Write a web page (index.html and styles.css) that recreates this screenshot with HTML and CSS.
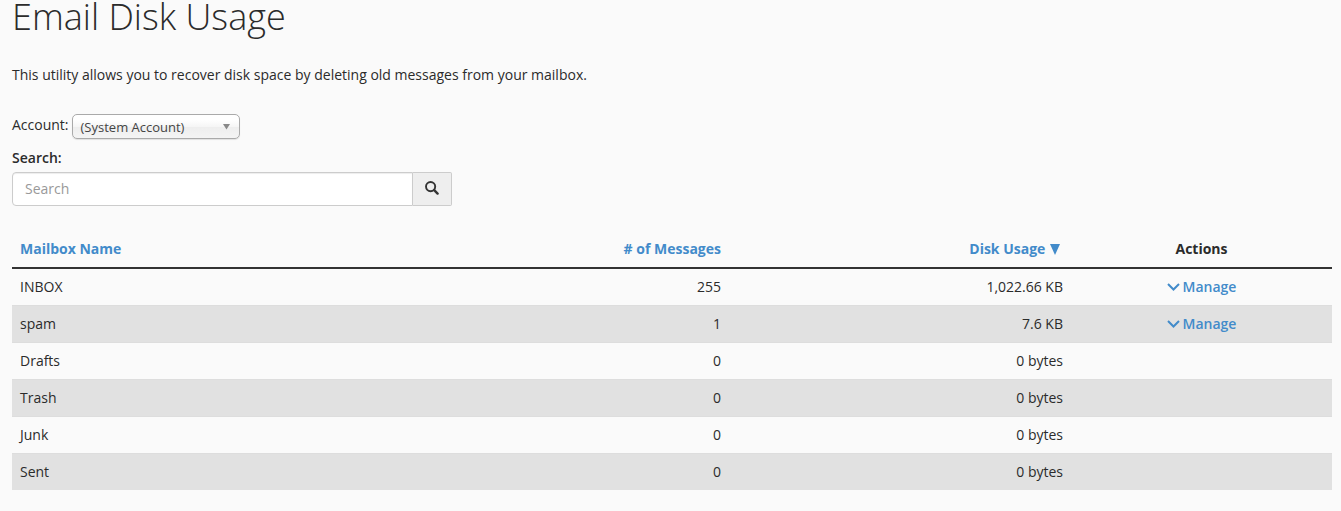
FILE: index.html
```html
<!DOCTYPE html>
<html lang="en">
<head>
<meta charset="utf-8">
<title>Email Disk Usage</title>
<link rel="stylesheet" href="styles.css">
</head>
<body>
<main class="page">
<h1 class="title">Email Disk Usage</h1>
<p class="intro">This utility allows you to recover disk space by deleting old messages from your mailbox.</p>
<div class="account"><span>Account:</span><button class="select" type="button"><span>(System Account)</span><svg width="7" height="6" viewBox="0 0 7 6"><path d="M0 0h7L3.500 5.500z" fill="#888"/></svg></button></div>
<label class="search-label" for="q">Search:</label>
<div class="search"><input id="q" class="search-input" type="text" placeholder="Search"><button class="search-button" type="button" aria-label="Search"><svg width="14" height="14" viewBox="0 0 14 14" fill="none" stroke="#333"><circle cx="5.6" cy="5.6" r="4.600" stroke-width="1.900"/><path d="M9.200 9.200l3.400 3.400" stroke-width="2.400" stroke-linecap="round"/></svg></button></div>
<table class="table">
<colgroup><col class="c-name"><col class="c-count"><col class="c-usage"><col class="c-actions"></colgroup>
<thead><tr><th class="link">Mailbox Name</th><th class="link num">#&nbsp;of Messages</th><th class="link num usage-head">Disk Usage <svg class="sort" width="10" height="11" viewBox="0 0 10 11"><path d="M0 0h10L5 11z" fill="currentColor"/></svg></th><th class="actions">Actions</th></tr></thead>
<tbody>
<tr><td>INBOX</td><td class="num">255</td><td class="num">1,022.66 KB</td><td class="actions"><a class="manage"><svg width="13" height="8" viewBox="0 0 13 8"><path d="M1 1l5.500 5.500L12 1" fill="none" stroke="currentColor" stroke-width="2"/></svg>Manage</a></td></tr>
<tr><td>spam</td><td class="num">1</td><td class="num">7.6 KB</td><td class="actions"><a class="manage"><svg width="13" height="8" viewBox="0 0 13 8"><path d="M1 1l5.500 5.500L12 1" fill="none" stroke="currentColor" stroke-width="2"/></svg>Manage</a></td></tr>
<tr><td>Drafts</td><td class="num">0</td><td class="num">0 bytes</td><td></td></tr>
<tr><td>Trash</td><td class="num">0</td><td class="num">0 bytes</td><td></td></tr>
<tr><td>Junk</td><td class="num">0</td><td class="num">0 bytes</td><td></td></tr>
<tr><td>Sent</td><td class="num">0</td><td class="num">0 bytes</td><td></td></tr>
</tbody>
</table>
</main>
</body>
</html>
```
FILE: styles.css
```css
* { box-sizing: border-box; }
body { margin: 0; background: #fafafa; color: #2b2b2b; font: 14px/20px "Open Sans", sans-serif; }
.page { padding: 0 9px 0 12px; }
.title { margin: 0; font-size: 36px; line-height: 34px; font-weight: 300; }
.intro { margin: 31px 0 28px; }
.account { display: flex; align-items: center; gap: 3px; height: 26px; line-height: 22px; }
.account > span { padding-bottom: 3px; }
.select { width: 168px; height: 25px; padding: 2px 9px 0 8px; display: flex; align-items: center; justify-content: space-between; border: 1px solid #aaa; border-radius: 5px; background: linear-gradient(#fff 20%, #f6f6f6 50%, #eee 52%, #f4f4f4); box-shadow: 0 1px 1px rgba(0, 0, 0, .1); color: #444; font: 13px "Open Sans", sans-serif; }
.select svg { margin-bottom: 1px; }
.search-label { display: block; margin: 9px 0 4px; font-weight: 600; }
.search { display: flex; width: 440px; height: 34px; }
.search-input { width: 401px; padding: 6px 12px; border: 1px solid #ccc; border-radius: 4px 0 0 4px; background: #fff; box-shadow: inset 0 1px 1px rgba(0, 0, 0, .075); font: 14px/20px "Open Sans", sans-serif; }
.search-input::placeholder { color: #999; opacity: 1; }
.search-button { width: 39px; padding: 0 0 2px; display: flex; align-items: center; justify-content: center; border: 1px solid #ccc; border-left: 0; border-radius: 0 2px 2px 0; background: #eee; }
.table { width: 1320px; margin-top: 24px; table-layout: fixed; border-collapse: separate; border-spacing: 0; }
.c-name { width: 376px; }
.c-count { width: 341px; }
.c-usage { width: 342px; }
.table th, .table td { height: 37px; padding: 8px; text-align: left; border-top: 1px solid #ddd; }
.table th { height: 39px; border-top: 0; border-bottom: 2px solid #333; font-weight: 700; }
.table tbody tr:first-child td { height: 36px; border-top: 0; }
.table tbody tr:nth-child(even) { background: #e1e1e1; }
.table .num { text-align: right; }
.table .usage-head { padding-right: 11px; }
.table .actions { text-align: center; }
.link, .manage { color: #428bca; }
.sort { margin-left: 1px; vertical-align: -1px; }
.manage { display: flex; align-items: center; justify-content: center; gap: 3px; font-weight: 600; }
```
